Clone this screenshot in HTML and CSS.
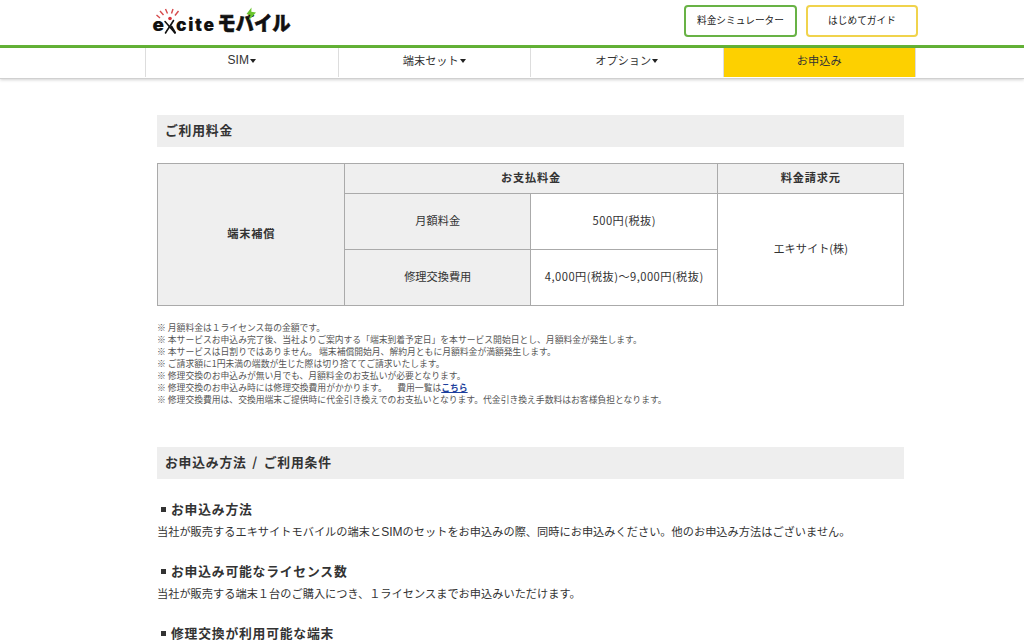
FILE: index.html
```html
<!DOCTYPE html>
<html lang="ja">
<head>
<meta charset="utf-8">
<title>エキサイトモバイル</title>
<link rel="stylesheet" href="styles.css">
</head>
<body>
<header class="header">
  <div class="header-inner">
    <svg class="logo" width="146" height="38" viewBox="0 0 146 38">
      <g class="logo-latin">
        <text x="1.5" y="24.5" textLength="11.5" lengthAdjust="spacingAndGlyphs">e</text>
        <text x="25" y="24.5" textLength="38" lengthAdjust="spacing">cite</text>
      </g>
      <text class="logo-kana" x="66.500" y="24.500" textLength="73" lengthAdjust="spacingAndGlyphs">モバイル</text>
      <g fill="none" stroke="#111" stroke-linecap="round">
        <path d="M14 15.5 L24 27" stroke-width="1.6"/>
        <path d="M22.500 14.500 C20 19 17.500 22 14.500 27" stroke-width="1.6"/>
        <path d="M20.500 20.500 L24 26.500" stroke-width="2"/>
      </g>
      <circle cx="19" cy="12.500" r="1.8" fill="#d8343a"/>
      <path d="M5.500 9 L9 12 M9 5 L12.500 9 M14.500 3 L16.500 7.500 M22 3 L20.500 7.500 M27.500 5 L24 9.500" fill="none" stroke="#d64a4c" stroke-width="1.4"/>
      <path d="M100.500 1.500 L95.500 8 L99.500 9 L97.500 14.500 L105 6.500 L100.300 5.800 Z" fill="#69c52d"/>
    </svg>
    <div class="header-buttons">
      <a class="header-button">料金シミュレーター</a>
      <a class="header-button guide">はじめてガイド</a>
    </div>
  </div>
</header>
<nav class="nav">
  <div class="nav-list">
    <a class="nav-item"><span class="nav-sim">SIM</span><i class="caret"></i></a>
    <a class="nav-item">端末セット<i class="caret"></i></a>
    <a class="nav-item">オプション<i class="caret"></i></a>
    <a class="nav-item apply">お申込み</a>
  </div>
</nav>
<main class="main">
  <h2 class="heading">ご利用料金</h2>
  <table class="price">
    <tr class="price-head"><th rowspan="3">端末補償</th><th colspan="2">お支払料金</th><th>料金請求元</th></tr>
    <tr><td class="label">月額料金</td><td class="amount">500円(税抜)</td><td rowspan="2">エキサイト(株)</td></tr>
    <tr><td class="label">修理交換費用</td><td class="amount">4,000円(税抜)〜9,000円(税抜)</td></tr>
  </table>
  <ul class="notes">
    <li>月額料金は１ライセンス毎の金額です。</li>
    <li>本サービスお申込み完了後、当社よりご案内する「端末到着予定日」を本サービス開始日とし、月額料金が発生します。</li>
    <li>本サービスは日割りではありません。 端末補償開始月、解約月ともに月額料金が満額発生します。</li>
    <li>ご請求額に1円未満の端数が生じた際は切り捨ててご請求いたします。</li>
    <li>修理交換のお申込みが無い月でも、月額料金のお支払いが必要となります。</li>
    <li>修理交換のお申込み時には修理交換費用がかかります。　<span class="fee-link">費用一覧は<a class="link">こちら</a></span></li>
    <li>修理交換費用は、交換用端末ご提供時に代金引き換えでのお支払いとなります。代金引き換え手数料はお客様負担となります。</li>
  </ul>
  <h2 class="heading spaced">お申込み方法 / ご利用条件</h2>
  <section class="term">
    <h3 class="term-title">お申込み方法</h3>
    <p class="term-text">当社が販売するエキサイトモバイルの端末と<span class="latin">SIM</span>のセットをお申込みの際、同時にお申込みください。他のお申込み方法はございません。</p>
  </section>
  <section class="term">
    <h3 class="term-title">お申込み可能なライセンス数</h3>
    <p class="term-text">当社が販売する端末１台のご購入につき、１ライセンスまでお申込みいただけます。</p>
  </section>
  <section class="term last">
    <h3 class="term-title">修理交換が利用可能な端末</h3>
  </section>
</main>
</body>
</html>
```
FILE: styles.css
```css
* { box-sizing: border-box; }
body {
  margin: 0;
  height: 640px;
  overflow: hidden;
  background: #fff;
  color: #333;
  font: 11.2px/18px "Noto Sans CJK JP", sans-serif;
}
.header { height: 48px; border-bottom: 3px solid #63b236; }
.header-inner { display: flex; justify-content: space-between; width: 767px; margin-left: 151px; padding-top: 5px; }
.logo { margin-top: 1px; overflow: visible; }
.logo-latin { font: 900 17.5px Inter, sans-serif; fill: #111; }
.logo-kana { font: 900 20px "Noto Sans CJK JP", sans-serif; fill: #111; stroke: #111; stroke-width: .6px; }
.header-buttons { display: flex; gap: 9px; }
.header-button {
  width: 113px;
  height: 32px;
  border: 2px solid #68b245;
  border-radius: 4px;
  font-size: 9.7px;
  line-height: 26px;
  text-align: center;
  color: #222;
}
.header-button.guide { width: 112px; border-color: #f0d34c; }
.nav { height: 31px; border-bottom: 1px solid #d0d0d0; box-shadow: 0 1px 3px rgba(0, 0, 0, .18); }
.nav-list { display: flex; width: 771px; height: 29px; margin-left: 145px; border-left: 1px solid #ddd; }
.nav-item {
  display: flex;
  flex: 1 1 0;
  justify-content: center;
  border-right: 1px solid #ddd;
  line-height: 25px;
}
.nav-sim { font: 12px/24px "Liberation Sans", sans-serif; }
.nav-item.apply { background: #fdd000; }
.caret { width: 0; height: 0; margin: 11px 0 0 1px; border: 3.5px solid transparent; border-top: 4px solid #222; border-bottom: 0; }
.main { width: 747px; margin: 36px 0 0 157px; }
.heading {
  height: 32px;
  margin: 0;
  padding-left: 8px;
  background: #eee;
  font-size: 12.8px;
  letter-spacing: .8px;
  line-height: 29px;
}
.heading.spaced { word-spacing: 2px; }
.price { width: 747px; height: 143px; margin: 16px 0; border-collapse: collapse; table-layout: fixed; text-align: center; }
.price td { padding: 0 0 4px 1px; border: 1px solid #aaa; }
.price th { padding: 0 0 3px 1px; border: 1px solid #aaa; background: #efefef; letter-spacing: .8px; }
.price-head { height: 30px; }
.price .label { background: #efefef; }
.amount { letter-spacing: .45px; white-space: nowrap; }
.notes { margin: 0 0 41px; padding: 0; list-style: none; font-size: 8.8px; line-height: 12px; color: #555; white-space: nowrap; }
.notes li::before { content: "※ "; }
.fee-link { margin-left: 6px; }
.link { color: #1d3f9c; font-weight: 700; text-decoration: underline; }
.term { height: 62px; }
.term.last { height: 22px; }
.heading + .term { margin-top: 19px; }
.term-title { display: flex; align-items: center; gap: 5px; margin: 0; padding-left: 4px; font-size: 12.8px; letter-spacing: .8px; line-height: 22px; }
.term-title::before { content: ""; width: 5px; height: 5px; background: #333; }
.term-text { margin: 2px 0 0; line-height: 18px; letter-spacing: .02px; white-space: nowrap; }
.latin { font: 12px/1 "Liberation Sans", sans-serif; }
```
